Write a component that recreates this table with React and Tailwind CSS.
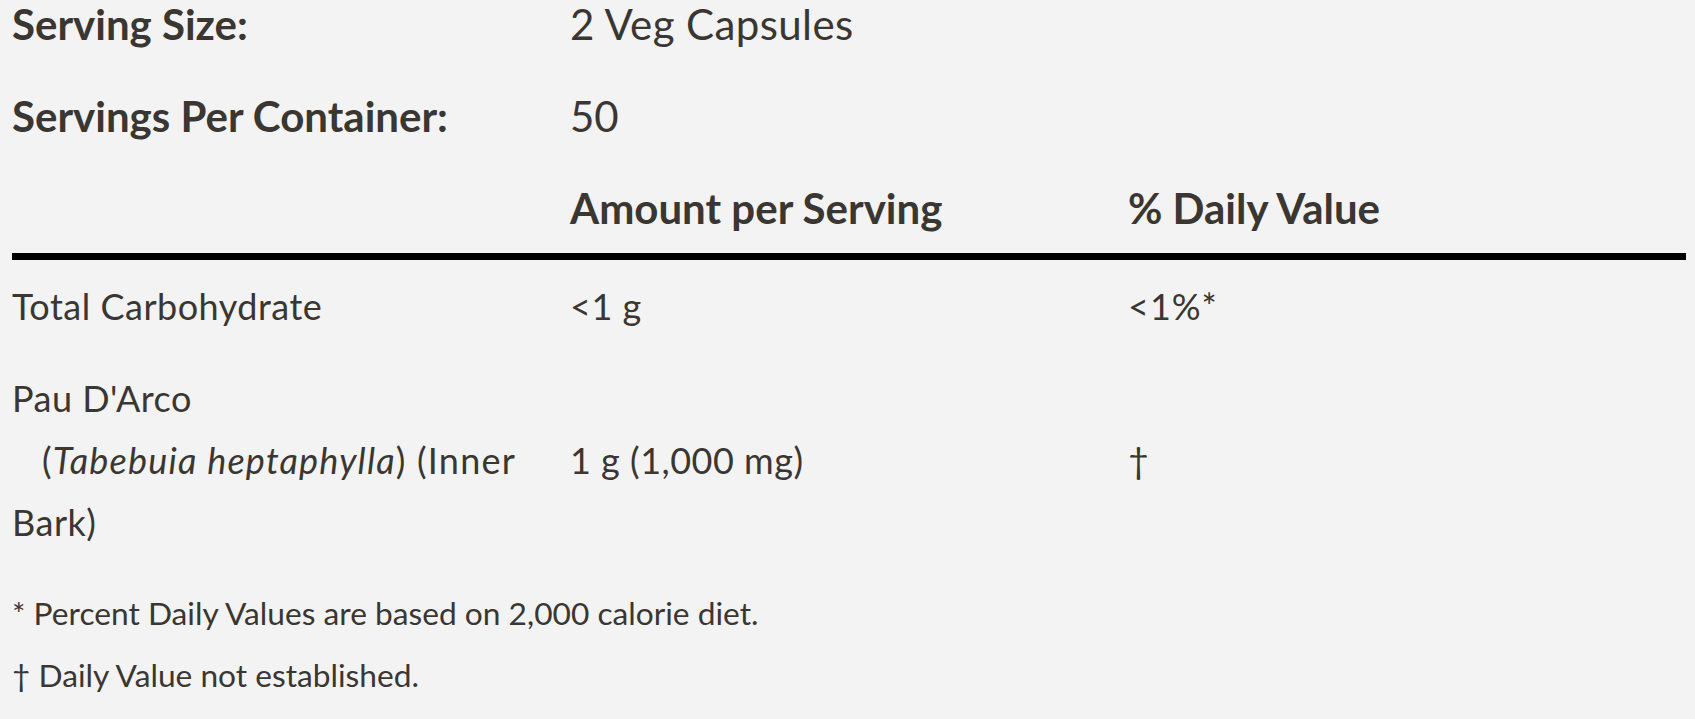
import React from "react";

const font = { fontFamily: "Lato, 'Noto Sans', sans-serif" };

const App = () => {
  return (
    <div
      className="min-h-[719px] bg-[#f3f3f3] text-[#3a3632] pl-[12px] pr-[9px]"
      style={font}
    >
      {/* ---------------- SERVING INFO ---------------- */}
      <div className="grid grid-cols-3 text-[42px] leading-[48px]">
        <div className="font-bold">Serving Size:</div>
        <div className="col-span-2 tracking-[0.4px]">2 Veg Capsules</div>
      </div>
      <div className="grid grid-cols-3 text-[42px] leading-[48px] mt-[44px]">
        <div className="font-bold">Servings Per Container:</div>
        <div className="col-span-2">50</div>
      </div>

      {/* HEADER */}
      <div className="grid grid-cols-3 text-[42px] leading-[48px] font-bold mt-[44px]">
        <div></div>
        <div>Amount per Serving</div>
        <div>% Daily Value</div>
      </div>
      <div className="h-[7px] bg-black mt-[21px]"></div>

      {/* ---------------- ROWS ---------------- */}
      <div className="text-[36px] leading-[62px] tracking-[0.5px]">
        <div className="grid grid-cols-3 py-[15px]">
          <div>Total Carbohydrate</div>
          <div>&lt;1 g</div>
          <div className="tracking-[1px]">&lt;1%*</div>
        </div>

        <div className="grid grid-cols-3 py-[15px] items-center">
          <div className="pr-[20px]">
            Pau D'Arco
            <br />
            <span className="pl-[30px] tracking-[1.2px]">
              (<i>Tabebuia heptaphylla</i>) (Inner
            </span>
            <br />
            Bark)
          </div>
          <div>1 g (1,000 mg)</div>
          <div>†</div>
        </div>

        {/* FOOTNOTES */}
        <div className="pt-[14px] text-[31.7px] tracking-normal">
          <p>* Percent Daily Values are based on 2,000 calorie diet.</p>
          <p>† Daily Value not established.</p>
        </div>
      </div>
    </div>
  );
};

export default App;
